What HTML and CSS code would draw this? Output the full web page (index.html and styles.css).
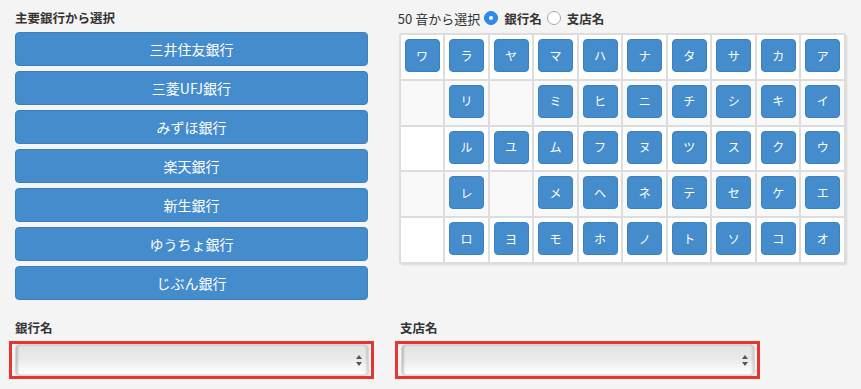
FILE: index.html
```html
<!DOCTYPE html>
<html lang="ja">
<head>
<meta charset="utf-8">
<title>銀行選択</title>
<link rel="stylesheet" href="styles.css">
</head>
<body>
<div class="page">
  <div class="top">
    <section class="major">
      <h2 class="title">主要銀行から選択</h2>
      <ul class="bank-list">
        <li><button class="bank-btn">三井住友銀行</button></li>
        <li><button class="bank-btn">三菱UFJ銀行</button></li>
        <li><button class="bank-btn">みずほ銀行</button></li>
        <li><button class="bank-btn">楽天銀行</button></li>
        <li><button class="bank-btn">新生銀行</button></li>
        <li><button class="bank-btn">ゆうちょ銀行</button></li>
        <li><button class="bank-btn">じぶん銀行</button></li>
      </ul>
    </section>
    <section class="kana">
      <div class="kana-head">
        <span class="kana-label">50 音から選択</span>
        <label class="opt"><input type="radio" name="t" class="radio" checked><span class="opt-text">銀行名</span></label>
        <label class="opt"><input type="radio" name="t" class="radio"><span class="opt-text">支店名</span></label>
      </div>
      <div class="kana-grid">
        <div class="cell"><button class="kbtn">ワ</button></div>
        <div class="cell"><button class="kbtn">ラ</button></div>
        <div class="cell"><button class="kbtn">ヤ</button></div>
        <div class="cell"><button class="kbtn">マ</button></div>
        <div class="cell"><button class="kbtn">ハ</button></div>
        <div class="cell"><button class="kbtn">ナ</button></div>
        <div class="cell"><button class="kbtn">タ</button></div>
        <div class="cell"><button class="kbtn">サ</button></div>
        <div class="cell"><button class="kbtn">カ</button></div>
        <div class="cell"><button class="kbtn">ア</button></div>

        <div class="cell alt"></div>
        <div class="cell alt"><button class="kbtn">リ</button></div>
        <div class="cell alt"></div>
        <div class="cell alt"><button class="kbtn">ミ</button></div>
        <div class="cell alt"><button class="kbtn">ヒ</button></div>
        <div class="cell alt"><button class="kbtn">ニ</button></div>
        <div class="cell alt"><button class="kbtn">チ</button></div>
        <div class="cell alt"><button class="kbtn">シ</button></div>
        <div class="cell alt"><button class="kbtn">キ</button></div>
        <div class="cell alt"><button class="kbtn">イ</button></div>

        <div class="cell"></div>
        <div class="cell"><button class="kbtn">ル</button></div>
        <div class="cell"><button class="kbtn">ユ</button></div>
        <div class="cell"><button class="kbtn">ム</button></div>
        <div class="cell"><button class="kbtn">フ</button></div>
        <div class="cell"><button class="kbtn">ヌ</button></div>
        <div class="cell"><button class="kbtn">ツ</button></div>
        <div class="cell"><button class="kbtn">ス</button></div>
        <div class="cell"><button class="kbtn">ク</button></div>
        <div class="cell"><button class="kbtn">ウ</button></div>

        <div class="cell alt"></div>
        <div class="cell alt"><button class="kbtn">レ</button></div>
        <div class="cell alt"></div>
        <div class="cell alt"><button class="kbtn">メ</button></div>
        <div class="cell alt"><button class="kbtn">ヘ</button></div>
        <div class="cell alt"><button class="kbtn">ネ</button></div>
        <div class="cell alt"><button class="kbtn">テ</button></div>
        <div class="cell alt"><button class="kbtn">セ</button></div>
        <div class="cell alt"><button class="kbtn">ケ</button></div>
        <div class="cell alt"><button class="kbtn">エ</button></div>

        <div class="cell"></div>
        <div class="cell"><button class="kbtn">ロ</button></div>
        <div class="cell"><button class="kbtn">ヨ</button></div>
        <div class="cell"><button class="kbtn">モ</button></div>
        <div class="cell"><button class="kbtn">ホ</button></div>
        <div class="cell"><button class="kbtn">ノ</button></div>
        <div class="cell"><button class="kbtn">ト</button></div>
        <div class="cell"><button class="kbtn">ソ</button></div>
        <div class="cell"><button class="kbtn">コ</button></div>
        <div class="cell"><button class="kbtn">オ</button></div>
      </div>
    </section>
  </div>
  <div class="bottom">
    <div class="field">
      <div class="field-label">銀行名</div>
      <div class="selwrap">
        <div class="selbox">
          <select class="sel"><option></option></select>
          <svg class="arrows" width="6" height="11" viewBox="0 0 6 11"><path d="M3 0 L6 4 L0 4 Z M0 7 L6 7 L3 11 Z" fill="#555"/></svg>
        </div>
      </div>
    </div>
    <div class="field">
      <div class="field-label">支店名</div>
      <div class="selwrap">
        <div class="selbox">
          <select class="sel"><option></option></select>
          <svg class="arrows" width="6" height="11" viewBox="0 0 6 11"><path d="M3 0 L6 4 L0 4 Z M0 7 L6 7 L3 11 Z" fill="#555"/></svg>
        </div>
      </div>
    </div>
  </div>
</div>
</body>
</html>
```
FILE: styles.css
```css
* { box-sizing: border-box; }
html, body { margin: 0; padding: 0; }
body {
  background: #f4f4f4;
  color: #333;
  font-family: "Noto Sans CJK JP", "Noto Sans", sans-serif;
}
.page { padding: 8px 15px 0 15px; }
.top { display: flex; gap: 31px; align-items: flex-start; }
.major { width: 355px; }
.title {
  margin: 0 0 4px 0;
  font-size: 12.5px;
  line-height: 20px;
  font-weight: bold;
}
.bank-list { list-style: none; margin: 0; padding: 0; display: flex; flex-direction: column; gap: 5px; }
.bank-btn {
  display: block;
  width: 100%;
  height: 34px;
  background: #448ccb;
  border: 1px solid #3a82bf;
  border-radius: 4px;
  color: #fff;
  font-family: inherit;
  font-size: 14px;
  line-height: 31px;
  padding: 0;
}
.kana { width: 450px; }
.kana-head {
  display: flex;
  align-items: center;
  height: 20px;
  margin-bottom: 5px;
  margin-left: -1px;
}
.kana-label { margin-right: 4px; font-size: 13px; }
.opt { display: flex; align-items: center; margin-right: 5px; }
.opt-text { font-weight: bold; margin-left: 6px; font-size: 12.5px; }
.radio {
  appearance: none;
  -webkit-appearance: none;
  margin: 0;
  width: 14px;
  height: 14px;
  border-radius: 50%;
  border: 1px solid #a8a8a8;
  background: #fff;
  position: relative;
}
.radio:checked {
  background: #2f8af0;
  border-color: #2a7ee0;
}
.radio:checked::after {
  content: "";
  position: absolute;
  left: 4px;
  top: 4px;
  width: 4px;
  height: 4px;
  border-radius: 50%;
  background: #fff;
}
.kana-grid {
  display: grid;
  grid-template-columns: repeat(10, 1fr);
  grid-auto-rows: 43.8px;
  gap: 2px;
  background: #dddddd;
  border: 2px solid #dddddd;
  border-radius: 3px;
  box-shadow: 1px 1px 2px rgba(0,0,0,0.12);
}
.cell {
  background: #fff;
  display: flex;
  justify-content: center;
  align-items: flex-start;
  padding-top: 4px;
}
.cell.alt { background: #f9f9f9; }
.kbtn {
  width: 35px;
  height: 33px;
  background: #448ccb;
  border: 1px solid #3a82bf;
  border-radius: 4px;
  color: #fff;
  font-family: inherit;
  font-size: 12px;
  line-height: 30px;
  padding: 0;
}
.bottom { display: flex; gap: 30px; margin-top: 18px; }
.field { width: 355px; }
.field-label {
  font-size: 12.5px;
  font-weight: bold;
  line-height: 20px;
  margin-bottom: 3px;
}
.selwrap {
  width: 365px;
  margin-left: -6px;
  border: 3px solid #e8352f;
  padding: 0 2px 0 3px;
}
.field + .field .selwrap { margin-left: -5px; }
.selbox { position: relative; height: 32px; }
.sel {
  appearance: none;
  -webkit-appearance: none;
  display: block;
  width: 100%;
  height: 32px;
  margin: 0;
  border: 1px solid #d6d6d6;
  border-radius: 4px;
  background: linear-gradient(#e4e4e4 0%, #e9e9e9 45%, #f6f6f6 75%, #ffffff 100%);
  box-shadow: inset 2px 0 2px rgba(0,0,0,0.18), inset -2px 0 2px rgba(0,0,0,0.12);
  font-family: inherit;
}
.arrows {
  position: absolute;
  right: 7px;
  top: 11px;
}
```
